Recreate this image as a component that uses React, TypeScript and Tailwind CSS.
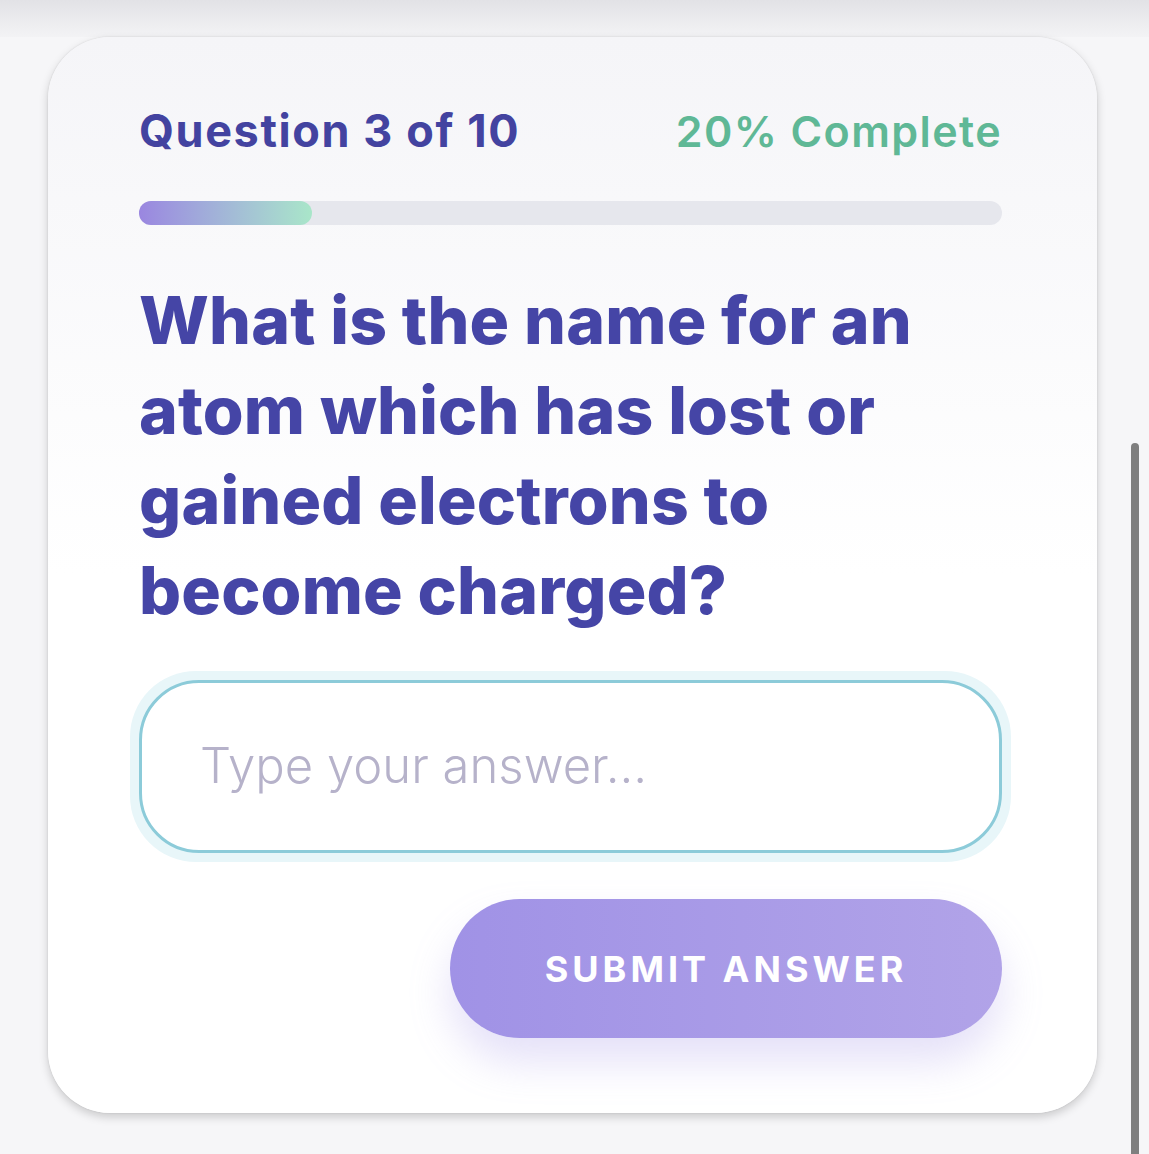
export default function App() {
  const progress = 20;

  return (
    <div className="relative min-h-screen w-full bg-[#f6f6f8] font-['Inter',sans-serif] overflow-hidden">
      <div className="h-[37px] w-full bg-gradient-to-b from-[#e2e2e6] to-[#f3f3f5]" />
      <div className="px-[48px] pr-[52px] pb-10">
        <div className="rounded-[62px] bg-gradient-to-b from-[#f5f5f8] via-white to-white shadow-[0_4px_10px_rgba(0,0,0,0.18),0_0_2px_rgba(0,0,0,0.12)] pl-[91px] pr-[95px] pt-[64px] pb-[75px]">
          <div className="flex items-center justify-between">
            <p className="text-[45px] leading-[60px] font-bold tracking-[1.6px] text-[#4343a0]">
              Question 3 of 10
            </p>
            <p className="text-[43px] leading-[60px] font-semibold tracking-[1.4px] text-[#5fb896]">
              {progress}% Complete
            </p>
          </div>

          <div className="mt-[40px] h-[24px] w-full rounded-full bg-[#e6e7ed]">
            <div
              className="h-full rounded-full bg-gradient-to-r from-[#9a86e0] to-[#a9e6c9]"
              style={{ width: `${progress}%` }}
            />
          </div>

          <h1 className="mt-[50px] text-[66px] leading-[90px] font-extrabold tracking-[0.2px] text-[#4545a6]">
            What is the name for an
            <br />
            atom which has lost or
            <br />
            gained electrons to
            <br />
            become charged?
          </h1>

          <div className="mt-[36px] rounded-[66px] p-[9px] -mx-[9px] bg-[#e8f6f9]">
            <input
              type="text"
              placeholder="Type your answer..."
              className="block w-full h-[173px] rounded-[60px] border-[3px] border-[#8ccbd9] bg-white px-[58px] pb-[2px] text-[49px] font-light text-[#4545a6] placeholder:text-[#b6b2ca] outline-none"
            />
          </div>

          <div className="mt-[37px] flex justify-end">
            <button className="w-[552px] h-[139px] rounded-full bg-gradient-to-r from-[#a092e6] to-[#b1a3e8] text-white text-[36px] font-bold tracking-[4px] shadow-[0_24px_40px_rgba(160,146,230,0.28)]">
              SUBMIT ANSWER
            </button>
          </div>
        </div>
      </div>
      <div className="absolute right-[10px] top-[443px] bottom-0 w-[8px] rounded-t-full bg-[#7f7f7f]" />
    </div>
  );
}
